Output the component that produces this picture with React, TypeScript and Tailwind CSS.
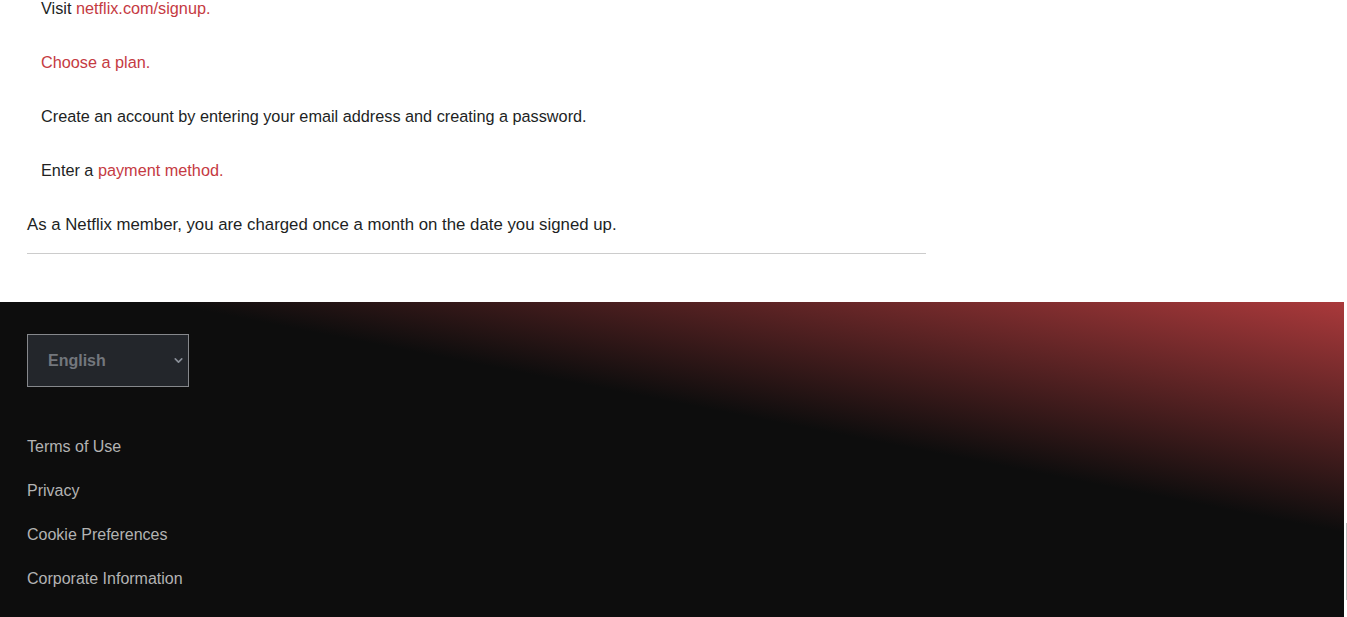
import { ChevronDown } from 'lucide-react';

const footerLinks = ['Terms of Use', 'Privacy', 'Cookie Preferences', 'Corporate Information'];

export default function App() {
  return (
    <div className="flex h-[617px] overflow-hidden bg-white font-['Liberation_Sans',Arial,sans-serif]">
      <div className="flex-1 flex flex-col">
        {/* article tail */}
        <div className="pl-[27px] -mt-[3px] text-[16px] leading-[22px] text-[#221f1f]">
          <ol className="pl-[14px] flex flex-col gap-[32px] text-[16.25px]">
            <li>
              Visit <a className="text-[#c53a42]">netflix.com/signup.</a>
            </li>
            <li>
              <a className="text-[#c53a42]">Choose a plan.</a>
            </li>
            <li>Create an account by entering your email address and creating a password.</li>
            <li>
              Enter a <a className="text-[#c53a42]">payment method.</a>
            </li>
          </ol>
          <p className="mt-[33px] text-[16.8px]">As a Netflix member, you are charged once a month on the date you signed up.</p>
          <div className="mt-[17px] w-[899px] h-px bg-[#cccccc]" />
        </div>

        {/* footer */}
        <footer className="mt-[48px] flex-1 pl-[27px] pt-[32px] bg-[#0d0d0d] bg-[linear-gradient(11deg,#0d0d0d_60%,#aa393b_100%)]">
          <div className="relative w-[162px] h-[53px] border border-[#86888c] bg-[#23262b] flex items-center pl-[20px]">
            <span className="text-[16px] font-bold text-[#73777d]">English</span>
            <ChevronDown className="absolute right-[3px] top-[19px] w-[13px] h-[13px] text-[#8a8f98]" strokeWidth={3} />
          </div>
          <ul className="mt-[49px] flex flex-col gap-[22px] text-[16px] leading-[22px] text-[#b3b3b3]">
            {footerLinks.map((l) => (
              <li key={l}>
                <a>{l}</a>
              </li>
            ))}
          </ul>
        </footer>
      </div>

      {/* scrollbar strip */}
      <div className="w-[3px] bg-white relative">
        <div className="absolute left-[2px] top-[523px] w-px h-[77px] bg-[#c1c1c1]" />
      </div>
    </div>
  );
}
